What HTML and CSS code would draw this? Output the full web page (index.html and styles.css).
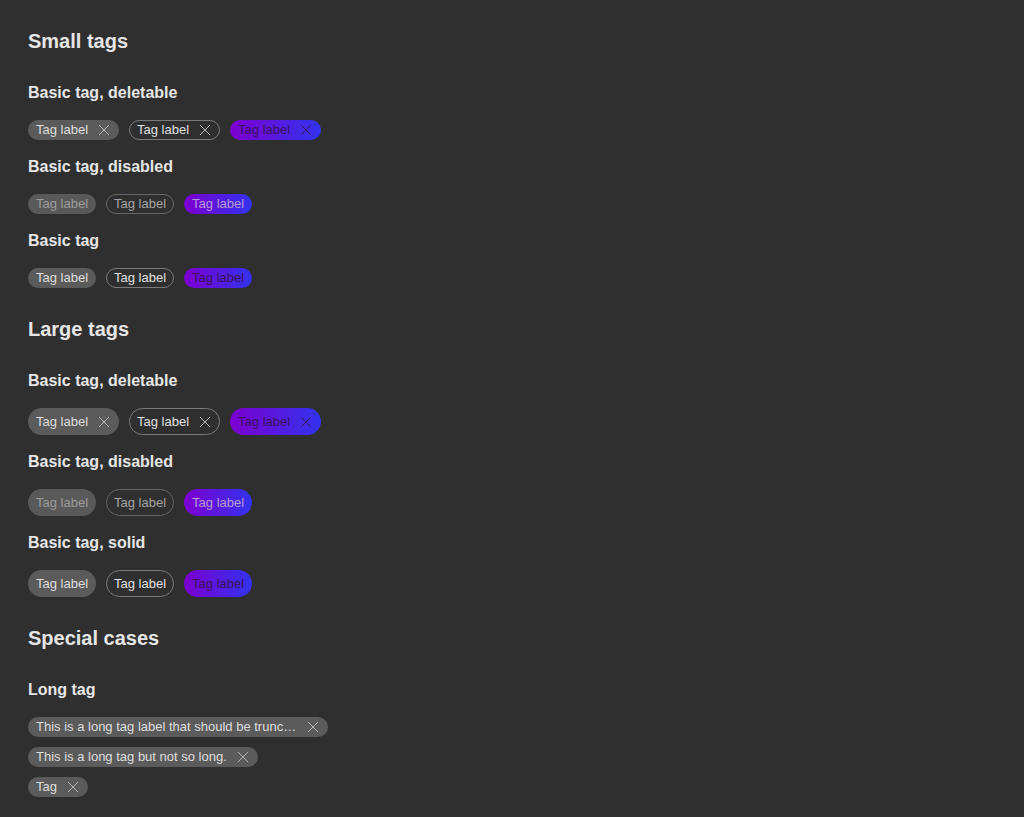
FILE: index.html
```html
<!DOCTYPE html>
<html>
<head>
<meta charset="utf-8">
<link rel="stylesheet" href="styles.css">
</head>
<body>
<section class="group">
  <h2>Small tags</h2>
  <h3>Basic tag, deletable</h3>
  <div class="row">
    <span class="tag fill del">Tag label<span class="x"><svg viewBox="0 0 16 16"><path d="M3 3L13 13M13 3L3 13"/></svg></span></span>
    <span class="tag outline del">Tag label<span class="x"><svg viewBox="0 0 16 16"><path d="M3 3L13 13M13 3L3 13"/></svg></span></span>
    <span class="tag grad del">Tag label<span class="x"><svg viewBox="0 0 16 16"><path d="M3 3L13 13M13 3L3 13"/></svg></span></span>
  </div>
  <h3>Basic tag, disabled</h3>
  <div class="row">
    <span class="tag fill dis">Tag label</span>
    <span class="tag outline dis">Tag label</span>
    <span class="tag grad dis">Tag label</span>
  </div>
  <h3>Basic tag</h3>
  <div class="row">
    <span class="tag fill">Tag label</span>
    <span class="tag outline">Tag label</span>
    <span class="tag grad">Tag label</span>
  </div>
</section>
<section class="group">
  <h2>Large tags</h2>
  <h3>Basic tag, deletable</h3>
  <div class="row">
    <span class="tag lg fill del">Tag label<span class="x"><svg viewBox="0 0 16 16"><path d="M3 3L13 13M13 3L3 13"/></svg></span></span>
    <span class="tag lg outline del">Tag label<span class="x"><svg viewBox="0 0 16 16"><path d="M3 3L13 13M13 3L3 13"/></svg></span></span>
    <span class="tag lg grad del">Tag label<span class="x"><svg viewBox="0 0 16 16"><path d="M3 3L13 13M13 3L3 13"/></svg></span></span>
  </div>
  <h3>Basic tag, disabled</h3>
  <div class="row">
    <span class="tag lg fill dis">Tag label</span>
    <span class="tag lg outline dis">Tag label</span>
    <span class="tag lg grad dis">Tag label</span>
  </div>
  <h3>Basic tag, solid</h3>
  <div class="row">
    <span class="tag lg fill">Tag label</span>
    <span class="tag lg outline">Tag label</span>
    <span class="tag lg grad">Tag label</span>
  </div>
</section>
<section class="group">
  <h2>Special cases</h2>
  <h3>Long tag</h3>
  <div class="col">
    <span class="tag fill del long"><span class="txt">This is a long tag label that should be truncated because it is way too long</span><span class="x"><svg viewBox="0 0 16 16"><path d="M3 3L13 13M13 3L3 13"/></svg></span></span>
    <span class="tag fill del long"><span class="txt">This is a long tag but not so long.</span><span class="x"><svg viewBox="0 0 16 16"><path d="M3 3L13 13M13 3L3 13"/></svg></span></span>
    <span class="tag fill del long"><span class="txt">Tag</span><span class="x"><svg viewBox="0 0 16 16"><path d="M3 3L13 13M13 3L3 13"/></svg></span></span>
  </div>
</section>
</body>
</html>
```

FILE: styles.css
```css
html, body {
  margin: 0;
  background: #2f2f2f;
}
body {
  padding: 29px 28px 0 28px;
  font-family: "Liberation Sans", Arial, sans-serif;
  color: #e6e6e6;
}
.group {
  margin-bottom: 29px;
}
h2 {
  margin: 0;
  font-size: 20px;
  line-height: 24px;
  font-weight: bold;
}
h3 {
  margin: 31px 0 18px 0;
  font-size: 16px;
  line-height: 18px;
  font-weight: bold;
}
.row + h3 {
  margin-top: 18px;
}
.row {
  display: flex;
  gap: 10px;
}
.col {
  display: flex;
  flex-direction: column;
  align-items: flex-start;
  gap: 10px;
}
.tag {
  box-sizing: border-box;
  display: inline-flex;
  align-items: center;
  height: 20px;
  padding: 0 8px;
  border-radius: 10px;
  font-family: "Liberation Sans", Arial, sans-serif;
  font-size: 13px;
  line-height: 20px;
  white-space: nowrap;
}
.tag.lg {
  height: 27px;
  border-radius: 14px;
}
.tag.del {
  padding-right: 7px;
}
.x {
  display: inline-flex;
  width: 16px;
  height: 16px;
  margin-left: 8px;
  flex: none;
}
.x svg {
  width: 16px;
  height: 16px;
  fill: none;
  stroke: #b4b4b4;
  stroke-width: 1;
}
.fill {
  background: #5b5b5b;
  color: #dedede;
}
.outline {
  border: 1px solid #7a7a7a;
  color: #e0e0e0;
  padding: 0 7px;
}
.outline.del {
  padding-right: 6px;
}
.grad {
  background: linear-gradient(90deg, #7d00d0, #3232ee);
  color: #3b1360;
}
.grad .x svg {
  stroke: #3b1a6a;
}
.fill.dis {
  background: #595959;
  color: #9c9c9c;
}
.outline.dis {
  border-color: #666666;
  color: #a4a4a4;
}
.grad.dis {
  color: #b89ad8;
}
.long {
  max-width: 300px;
}
.long .txt {
  overflow: hidden;
  text-overflow: ellipsis;
  min-width: 0;
}
```
